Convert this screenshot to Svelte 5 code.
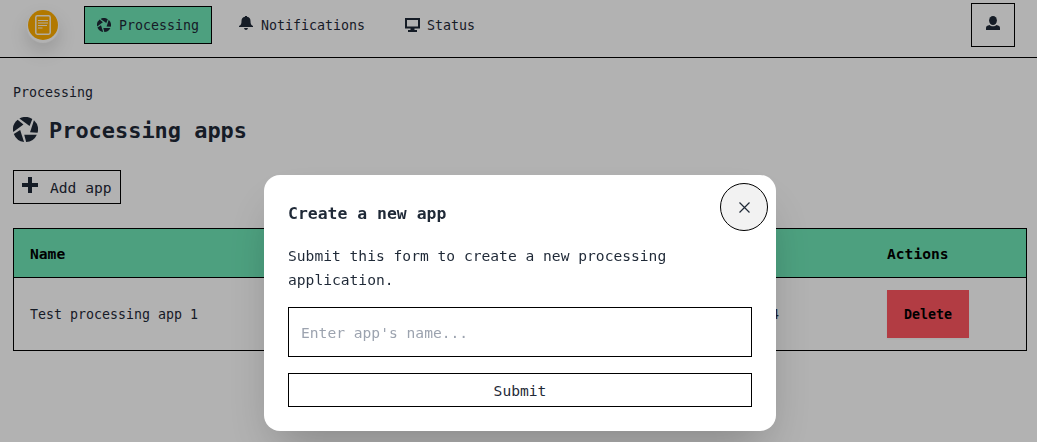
<script>
  let name = $state('');
  const blades = [0, 72, 144, 216, 288];
</script>

{#snippet aperture(size)}
  <svg width={size} height={size} viewBox="-12 -12 24 24" fill="currentColor" aria-hidden="true">
    {#each blades as angle}
      <path transform="rotate({angle})" d="M-1.200 5H10.900A12 12 0 0 1 .6 12Z" />
    {/each}
  </svg>
{/snippet}

<div class="page">
  <header>
    <div class="logo">
      <svg width="16" height="20" viewBox="0 0 16 20" fill="none" stroke="#fff" stroke-opacity=".9" stroke-width="1.500">
        <rect x=".8" y=".8" width="14.400" height="18.400" rx="1.600" />
        <path stroke-width="1.200" d="M3 5.500h10M3 8h10M3 10.500h9M3 13h4.500" />
      </svg>
    </div>
    <nav>
      <a class="item active" href="#processing">{@render aperture(14)}<span>Processing</span></a>
      <a class="item bell" href="#notifications">
        <svg width="14" height="14" viewBox="0 0 14 14" fill="currentColor"><path d="M6 0h2v.7c2.600.4 3.500 2.300 3.500 4.300 0 2.800.5 4 2.500 5v1H0v-1c2-1 2.500-2.200 2.500-5 0-2 .9-3.900 3.500-4.300zM5 12h4c-.3 1.300-1 2-2 2s-1.700-.7-2-2z" /></svg>
        <span>Notifications</span>
      </a>
      <a class="item" href="#status">
        <svg width="15" height="14" viewBox="0 0 15 14" fill="currentColor"><path fill-rule="evenodd" d="M0 0h15v10.500H9.500V12H12v2H3v-2h2.500v-1.500H0zM2 2v6.500h11V2z" /></svg>
        <span>Status</span>
      </a>
    </nav>
    <button class="user" aria-label="Account">
      <svg width="14" height="14" viewBox="0 0 14 14" fill="currentColor"><ellipse cx="7" cy="4.500" rx="3.900" ry="4.500" /><path d="M0 14v-2c0-1.700 1.300-2.600 3.500-3 1.500 1.700 5.500 1.700 7 0 2.200.4 3.500 1.300 3.500 3v2z" /></svg>
    </button>
  </header>
  <main>
    <div class="crumb">Processing</div>
    <h1>{@render aperture(25)}<span>Processing apps</span></h1>
    <button class="add">
      <svg width="16" height="16" viewBox="0 0 16 16" fill="currentColor"><path d="M6 0h4v6h6v4h-6v6H6v-6H0V6h6z" /></svg>
      <span>Add app</span>
    </button>
    <div class="table">
      <div class="row head"><span>Name</span><span></span><span>Actions</span></div>
      <div class="row"><span>Test processing app 1</span><span class="date">2024</span><button class="delete">Delete</button></div>
    </div>
  </main>
</div>

<div class="overlay">
  <form class="modal" onsubmit={(event) => event.preventDefault()}>
    <button type="button" class="close" aria-label="Close">
      <svg width="11" height="11" viewBox="0 0 11 11" fill="none" stroke="currentColor" stroke-width="1.200"><path d="M.5.500l10 10M10.500.500l-10 10" /></svg>
    </button>
    <h2>Create a new app</h2>
    <p>Submit this form to create a new processing application.</p>
    <input bind:value={name} placeholder="Enter app's name..." />
    <button class="submit">Submit</button>
  </form>
</div>

<style>
  :global(body) { margin: 0; overflow: hidden; background: #fff; }
  * { box-sizing: border-box; }
  .page, .overlay { font: 14.610px/24px "DejaVu Sans Mono", monospace; color: #1f2937; }
  .page { height: 442px; overflow: hidden; }
  button, input { font: inherit; color: inherit; margin: 0; padding: 0; background: #fff; border: 1px solid #000; border-radius: 0; }
  svg { display: block; flex: none; }
  header { height: 58px; display: flex; align-items: flex-start; padding: 3px 22px 0 28px; border-bottom: 1px solid #000; }
  .logo { width: 30px; height: 30px; margin-top: 7px; border-radius: 50%; background: #ffae00; display: grid; place-items: center; box-shadow: 0 1px 0 1px #fffffff0, 0 2px 1px 1px #ffffff, 0 10px 18px 2px #0002; }
  nav { display: flex; margin: 3px auto 0 26px; font-size: 13.290px; }
  .item { height: 38px; display: flex; align-items: center; gap: 8px; padding: 0 12px; margin-right: 14px; border: 1px solid transparent; color: inherit; text-decoration: none; }
  .item span { padding-top: 2px; }
  .item:last-child { gap: 7px; }
  .bell svg { margin-top: -4px; }
  .active { background: #6fe6b7; border-color: #000; }
  .user { width: 44px; height: 44px; display: grid; place-items: center; padding-bottom: 4px; }
  main { padding: 23px 10px 0 13px; }
  .crumb { font-size: 13.290px; }
  h1 { display: flex; align-items: center; gap: 11px; margin: 6px 0 0; height: 36px; font-size: 21.930px; line-height: 32px; }
  h1 span { padding-top: 3px; }
  .add { display: flex; align-items: center; gap: 12px; width: 108px; height: 34px; padding-left: 8px; margin-top: 23px; }
  .add span { padding-top: 2px; }
  .add svg { margin-top: -4px; }
  .table { margin-top: 24px; border: 1px solid #000; }
  .row { display: grid; grid-template-columns: 510px 1fr 139px; align-items: center; height: 72px; padding-left: 16px; font-size: 13.290px; }
  .row span { padding-top: 2px; }
  .head { height: 49px; background: #6fe6b7; border-bottom: 1px solid #000; color: #000; font-weight: 700; font-size: 14.610px; }
  .date { justify-self: end; margin-right: 108px; }
  .delete { width: 82px; height: 48px; padding-top: 2px; background: #ff5661; border: 0; color: #000; font-weight: 600; box-shadow: 0 1px 2px #0000000d; }
  .overlay { position: fixed; inset: 0; background: #0000004d; display: flex; align-items: flex-start; justify-content: center; padding: 175px 0 0 3px; }
  .modal { position: relative; width: 512px; height: 256px; padding: 25px 24px 24px; background: #fff; border-radius: 16px; box-shadow: 0 25px 50px -12px #00000040; display: flex; flex-direction: column; }
  .close { position: absolute; top: 8px; right: 8px; width: 48px; height: 48px; padding-left: 1px; border-radius: 50%; background: #f2f2f2; display: grid; place-items: center; }
  h2 { margin: 0; font-size: 16.440px; line-height: 28px; }
  p { margin: 16px 0 15px; }
  input { height: 50px; padding: 0 12px; }
  input::placeholder { color: #9ca3af; opacity: 1; }
  .submit { height: 34px; padding-top: 2px; margin-top: 16px; }
</style>
